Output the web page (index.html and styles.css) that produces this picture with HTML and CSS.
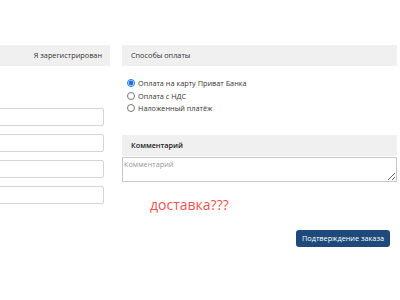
FILE: index.html
```html
<!DOCTYPE html>
<html lang="ru">
<head>
    <meta charset="UTF-8">
    <title>Оформление заказа</title>
    <link rel="stylesheet" href="styles.css">
</head>
<body>
    <div class="checkout">
        <div class="customer">
            <div class="panel-head panel-head-right">Я зарегистрирован</div>
            <div class="fields">
                <input type="text" class="field">
                <input type="text" class="field">
                <input type="text" class="field">
                <input type="text" class="field">
            </div>
        </div>
        <div class="order">
            <div class="panel-head">Способы оплаты</div>
            <ul class="payments">
                <li><label><input type="radio" name="pay" checked> Оплата на карту Приват Банка</label></li>
                <li><label><input type="radio" name="pay"> Оплата с НДС</label></li>
                <li><label><input type="radio" name="pay"> Наложенный платёж</label></li>
            </ul>
            <div class="panel-head panel-head-bold">Комментарий</div>
            <textarea class="comment" placeholder="Комментарий"></textarea>
            <p class="delivery">доставка???</p>
            <div class="actions">
                <button class="confirm">Подтверждение заказа</button>
            </div>
        </div>
    </div>
</body>
</html>
```

FILE: styles.css
```css
body {
    font-family: "Open Sans", "Noto Sans", sans-serif;
    font-size: 7.3px;
    margin: 0;
    padding: 0;
    background-color: #fff;
    color: #333;
    overflow: hidden;
}
.checkout {
    display: flex;
    gap: 12px;
    padding-top: 45px;
    margin-left: -100px;
}
.customer {
    width: 210px;
    flex: none;
}
.order {
    width: 275px;
    flex: none;
}
.panel-head {
    background-color: #f0f0f0;
    height: 21px;
    line-height: 21px;
    padding: 0 9px;
}
.panel-head-right {
    text-align: right;
    padding-right: 8px;
}
.panel-head-bold {
    font-weight: 600;
    color: #222;
}
.fields {
    padding-top: 42px;
    padding-right: 6px;
}
.field {
    display: block;
    box-sizing: border-box;
    width: 100%;
    height: 18px;
    margin: 0 0 8px;
    border: 1px solid #d4d4d4;
    border-radius: 2px;
    background: #fff;
}
.payments {
    list-style-type: none;
    margin: 11px 0 20px;
    padding: 0 0 0 5px;
}
.payments li {
    height: 12.5px;
    line-height: 12.5px;
}
.payments label {
    display: flex;
    align-items: center;
    gap: 3px;
}
.payments input {
    width: 8px;
    height: 8px;
    margin: 0;
    accent-color: #1a73e8;
}
.comment {
    display: block;
    box-sizing: border-box;
    width: 100%;
    height: 25px;
    margin: 1px 0 0;
    padding: 1px 1px;
    border: 1px solid #c8c8c8;
    font-family: "Open Sans", "Noto Sans", sans-serif;
    font-size: 7.3px;
    line-height: 10px;
    color: #333;
}
.comment::placeholder {
    color: #999;
}
.delivery {
    margin: 12px 0 0 28px;
    font-size: 14px;
    line-height: 22px;
    color: #ef5350;
}
.actions {
    display: flex;
    justify-content: flex-end;
    padding: 14px 7px 0 0;
}
.confirm {
    background-color: #1d4a7a;
    color: #fff;
    border: none;
    border-radius: 3px;
    height: 17px;
    padding: 0 6px;
    font-family: "Open Sans", "Noto Sans", sans-serif;
    font-size: 7.3px;
    cursor: pointer;
}
```
